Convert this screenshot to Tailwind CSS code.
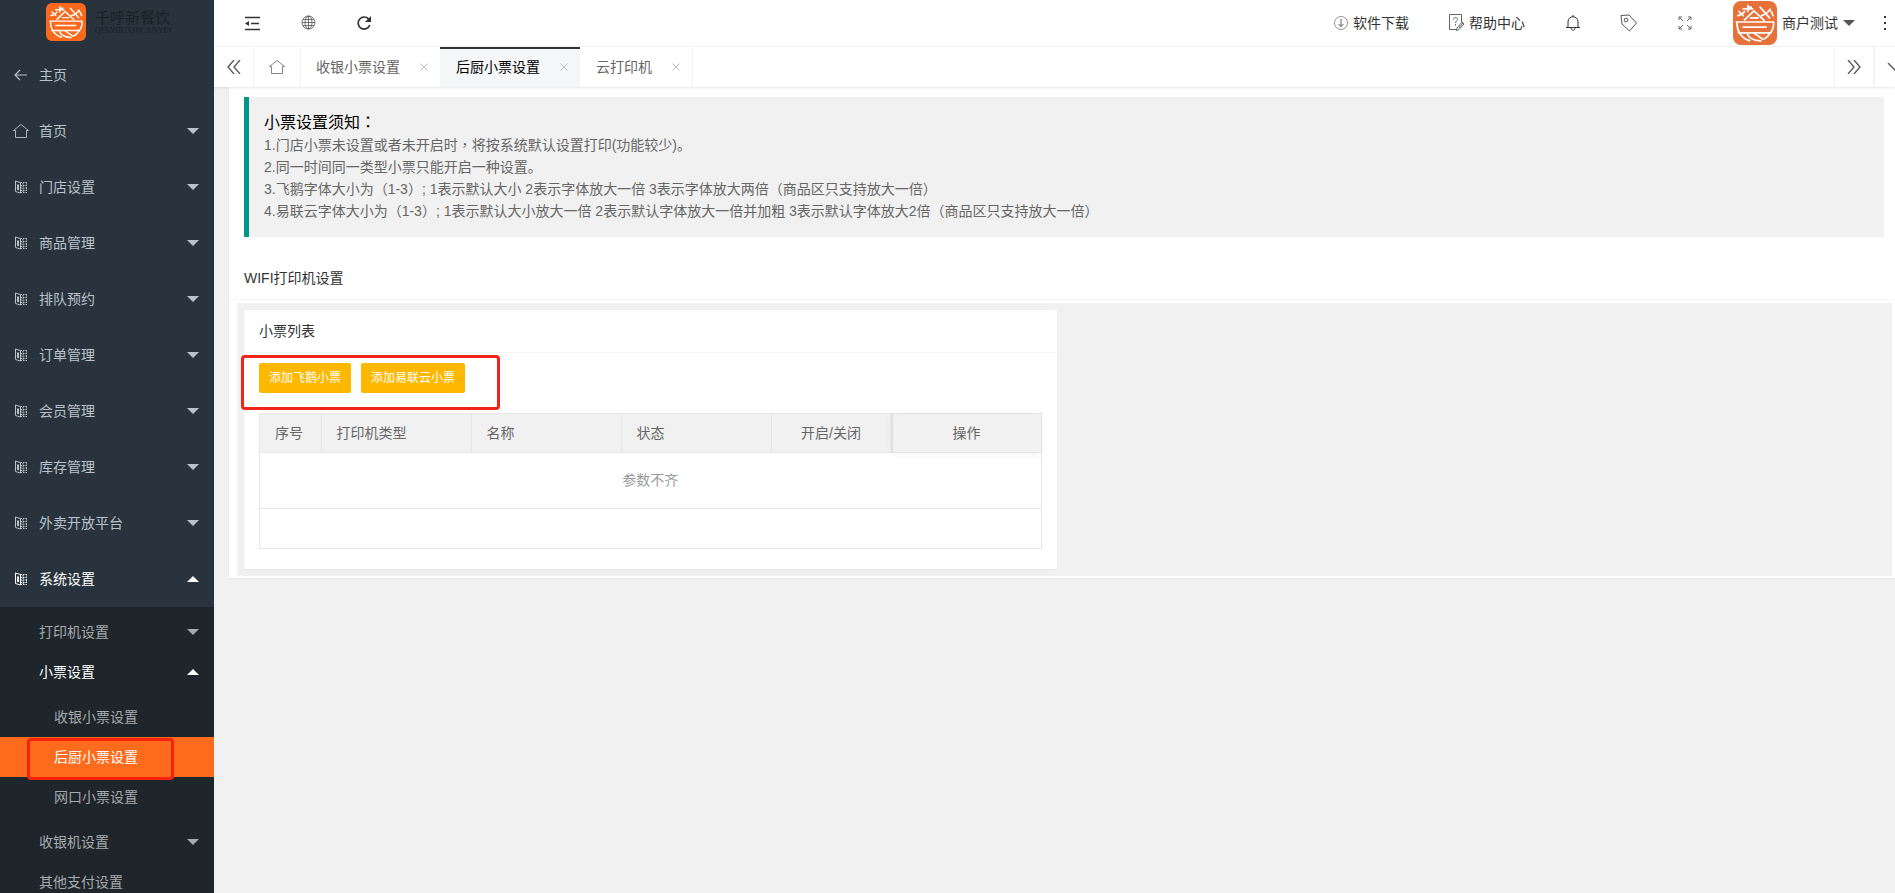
<!DOCTYPE html>
<html lang="zh-CN">
<head>
<meta charset="utf-8">
<title>后厨小票设置</title>
<script src="https://cdn.jsdelivr.net/npm/@tailwindcss/browser@4"></script>
</head>
<body class="h-screen overflow-hidden bg-[#f1f1f1] font-['Liberation_Sans','Noto_Sans_CJK_SC',sans-serif] text-sm text-[#333]">
<svg class="hidden" aria-hidden="true">
  <symbol id="logo" viewBox="0 0 130 130">
    <g fill="none" stroke="#fff" stroke-width="5" stroke-linecap="round" stroke-linejoin="round">
      <path d="M10 62H120M30 77H98M16 94H112M12 62C11 74 14 85 19 94C26 106 37 114 49 117M120 62C121 76 117 87 110 95C105 103 99 109 92 112"/>
      <path d="M62 95L88 113M42 95C45 108 60 117 82 118"/>
      <path d="M14 43C22 42 29 38 34 31M17 31L30 43M34 56L62 29L92 57M52 50H74M30 23H58M44 13V31M44 18H54M80 18L108 50M84 43C95 41 104 33 110 24M112 30C115 34 117 38 118 43"/>
    </g>
  </symbol>
  <symbol id="book" viewBox="0 0 14 14">
    <g fill="none" stroke="currentColor"><path d="M1.500 1v10.500L6.500 13V2.500L1 1M3.500 4.500v5.500M4.500 4.500v5.500"/><path stroke-dasharray="1.500 1" d="M6.500 2.500H13M6.500 5.500H13M6.500 8H13M6.500 10.500H13M6.500 12.500H13M9 3V13M12.500 2V13"/></g>
  </symbol>
  <symbol id="house" viewBox="0 0 16 16"><path fill="none" stroke="currentColor" stroke-width=".9" d="M.5 7.500L8 1.500L15.500 7.500H13.500V14.500H2.500V7.500H.5"/></symbol>
  <symbol id="down" viewBox="0 0 12 6"><path fill="currentColor" d="M0 0H12L6 6Z"/></symbol>
  <symbol id="up" viewBox="0 0 12 6"><path fill="currentColor" d="M0 6H12L6 0Z"/></symbol>
  <symbol id="close" viewBox="0 0 8 8"><path fill="none" stroke="currentColor" d="M.5.5L7.500 7.500M7.500.5L.5 7.500"/></symbol>
</svg>

<div class="flex h-full">
  <aside class="h-full w-[214px] shrink-0 overflow-hidden bg-[#28333e] text-[#bac1c8]">
    <a href="#" class="flex h-[47px] items-center pl-[46px] pb-1">
      <svg class="h-[38px] w-10 rounded-md bg-[#fb6a1c]" preserveAspectRatio="none"><use href="#logo"/></svg>
      <span class="ml-[9px] text-[#1a2027]">
        <span class="block text-[15px] leading-[18px]">千呼新餐饮</span>
        <span class="block font-['Liberation_Serif',serif] text-[8px] leading-[8px]">QIANHUXINCANYIN</span>
      </span>
    </a>
    <nav>
      <ul>
        <li><a href="#" class="flex h-14 items-center pl-[14px] pr-[15px]"><svg class="mr-3 h-3 w-[13px]" viewBox="0 0 13 12" fill="none" stroke="currentColor" stroke-width="1.200"><path d="M13 6H1M6 1L1 6L6 11"/></svg>主页</a></li>
        <li><a href="#" class="flex h-14 items-center pl-[13px] pr-[15px]"><svg class="mr-[10px] h-4 w-4"><use href="#house"/></svg>首页<svg class="ml-auto h-1.5 w-3"><use href="#down"/></svg></a></li>
        <li><a href="#" class="flex h-14 items-center pl-[14px] pr-[15px]"><svg class="mr-[11px] h-[14px] w-[14px]"><use href="#book"/></svg>门店设置<svg class="ml-auto h-1.5 w-3"><use href="#down"/></svg></a></li>
        <li><a href="#" class="flex h-14 items-center pl-[14px] pr-[15px]"><svg class="mr-[11px] h-[14px] w-[14px]"><use href="#book"/></svg>商品管理<svg class="ml-auto h-1.5 w-3"><use href="#down"/></svg></a></li>
        <li><a href="#" class="flex h-14 items-center pl-[14px] pr-[15px]"><svg class="mr-[11px] h-[14px] w-[14px]"><use href="#book"/></svg>排队预约<svg class="ml-auto h-1.5 w-3"><use href="#down"/></svg></a></li>
        <li><a href="#" class="flex h-14 items-center pl-[14px] pr-[15px]"><svg class="mr-[11px] h-[14px] w-[14px]"><use href="#book"/></svg>订单管理<svg class="ml-auto h-1.5 w-3"><use href="#down"/></svg></a></li>
        <li><a href="#" class="flex h-14 items-center pl-[14px] pr-[15px]"><svg class="mr-[11px] h-[14px] w-[14px]"><use href="#book"/></svg>会员管理<svg class="ml-auto h-1.5 w-3"><use href="#down"/></svg></a></li>
        <li><a href="#" class="flex h-14 items-center pl-[14px] pr-[15px]"><svg class="mr-[11px] h-[14px] w-[14px]"><use href="#book"/></svg>库存管理<svg class="ml-auto h-1.5 w-3"><use href="#down"/></svg></a></li>
        <li><a href="#" class="flex h-14 items-center pl-[14px] pr-[15px]"><svg class="mr-[11px] h-[14px] w-[14px]"><use href="#book"/></svg>外卖开放平台<svg class="ml-auto h-1.5 w-3"><use href="#down"/></svg></a></li>
        <li>
          <a href="#" class="flex h-14 items-center pl-[14px] pr-[15px] text-white"><svg class="mr-[11px] h-[14px] w-[14px]"><use href="#book"/></svg>系统设置<svg class="ml-auto h-1.5 w-3"><use href="#up"/></svg></a>
          <ul class="bg-[#1e252b] py-[5px] text-[#a7aaad]">
            <li><a href="#" class="flex h-10 items-center pl-[39px] pr-[15px]">打印机设置<svg class="ml-auto h-1.5 w-3"><use href="#down"/></svg></a></li>
            <li>
              <a href="#" class="flex h-10 items-center pl-[39px] pr-[15px] text-white">小票设置<svg class="ml-auto h-1.5 w-3"><use href="#up"/></svg></a>
              <ul class="py-[5px]">
                <li><a href="#" class="flex h-10 items-center pl-[54px]">收银小票设置</a></li>
                <li class="relative">
                  <a href="#" class="flex h-10 items-center bg-[#ff6b1c] pl-[54px] text-white">后厨小票设置</a>
                  <span class="pointer-events-none absolute left-[27px] top-px z-10 h-[42px] w-[147px] rounded-sm border-3 border-[#f8210c]"></span>
                </li>
                <li><a href="#" class="flex h-10 items-center pl-[54px]">网口小票设置</a></li>
              </ul>
            </li>
            <li><a href="#" class="flex h-10 items-center pl-[39px] pr-[15px]">收银机设置<svg class="ml-auto h-1.5 w-3"><use href="#down"/></svg></a></li>
            <li><a href="#" class="flex h-10 items-center pl-[39px]">其他支付设置</a></li>
          </ul>
        </li>
      </ul>
    </nav>
  </aside>

  <div class="flex min-w-0 flex-1 flex-col">
    <header class="flex h-[47px] shrink-0 items-start border-b border-[#f4f4f4] bg-white pl-[10px]">
      <button aria-label="折叠菜单" class="flex h-[45px] w-14 items-center justify-center"><svg class="h-4 w-4" viewBox="0 0 16 16" fill="none" stroke="#333" stroke-width="1.500"><path d="M1 2.500H16M7 8.500H15M1 14.500H16"/><path fill="#333" stroke="none" d="M1 8.500L5 6V11Z"/></svg></button>
      <button aria-label="网站" class="flex h-[45px] w-14 items-center justify-center"><svg class="h-[15px] w-[15px]" viewBox="0 0 15 15" fill="none" stroke="#444" stroke-width=".7"><circle cx="7.500" cy="7.500" r="6.500"/><ellipse cx="7.500" cy="7.500" rx="3.500" ry="6.500"/><path d="M7.500 1V14M1 7.500H14M2 4.500H13M2 10.500H13"/></svg></button>
      <button aria-label="刷新" class="flex h-[45px] w-14 items-center justify-center"><svg class="h-4 w-4" viewBox="0 0 16 16" fill="none" stroke="#333" stroke-width="1.700"><path d="M13 4.500A6 6 0 1 0 13.800 10"/><path fill="#333" stroke="none" d="M15 1V7H9Z"/></svg></button>
      <div class="ml-auto flex h-[45px] shrink-0 items-center">
        <a href="#" class="flex items-center gap-[5px] px-5"><svg class="h-[14px] w-[14px]" viewBox="0 0 14 14" fill="none" stroke="#777" stroke-width=".8"><circle cx="7" cy="7" r="6.500"/><path stroke="#333" d="M7 3V10.500M4.500 8L7 10.500L9.500 8"/></svg>软件下载</a>
        <a href="#" class="flex items-center gap-[5px] px-5"><svg class="h-[17px] w-[15px]" viewBox="0 0 15 17" fill="none" stroke="#555" stroke-width=".9"><path d="M8 15.500H.5V.5H12.500V8M4.500 5.500C4.500 3 8.500 3 8.500 5.500C8.500 7 6.500 7 6.500 9M6.500 10V11.500M8 14L13 8L15 10L10 15.500L7.500 16.500L8 14M10 14L14 9"/></svg>帮助中心</a>
        <button aria-label="消息" class="flex w-14 justify-center"><svg class="h-4 w-4" viewBox="0 0 16 16" fill="none" stroke="#333"><path d="M1 12.500H15M3 12.500V7C3 0 13 0 13 7V12.500M6 13C6 16 10 16 10 13M8 0V2"/></svg></button>
        <button aria-label="主题" class="flex w-14 justify-center"><svg class="h-[18px] w-[18px]" viewBox="0 0 18 18" fill="none" stroke="#555"><path d="M1 1.500L9 1L16.500 9L9.500 17L2 10Z"/><circle cx="6" cy="6" r="1.800"/></svg></button>
        <button aria-label="全屏" class="flex w-14 justify-center"><svg class="h-[14px] w-[14px]" viewBox="0 0 14 14" fill="none" stroke="#666"><path d="M1 4V1H4M1 1L5 5M10 1H13V4M13 1L9 5M1 10V13H4M1 13L5 9M13 10V13H10M13 13L9 9"/></svg></button>
        <button class="flex items-center gap-[5px] px-5"><svg class="h-11 w-11 rounded-lg bg-[#e7713a]"><use href="#logo"/></svg>商户测试<svg class="h-1.5 w-3 text-[#555]"><use href="#down"/></svg></button>
        <button aria-label="更多" class="flex w-5 justify-center"><svg class="h-[14px] w-1" viewBox="0 0 4 14" fill="#333"><path d="M1 0h2v2H1zM1 6h2v2H1zM1 12h2v2H1z"/></svg></button>
      </div>
    </header>

    <div class="z-10 flex h-10 shrink-0 overflow-hidden bg-white text-[#666] shadow-[0_1px_2px_rgba(0,0,0,.1)]">
      <button aria-label="向左滚动" class="flex w-10 shrink-0 items-center justify-center border-r border-[#f4f4f4]"><svg class="h-[14px] w-[14px]" viewBox="0 0 14 14" fill="none" stroke="#555" stroke-width="1.300"><path d="M7 0L1 7L7 14M13 0L7 7L13 14"/></svg></button>
      <a href="#" aria-label="首页" class="flex w-[47px] shrink-0 items-center justify-center border-r border-[#f4f4f4] text-[#777]"><svg class="h-4 w-4"><use href="#house"/></svg></a>
      <div class="flex w-[139px] shrink-0 items-center justify-between pl-[15px] pr-3"><a href="#">收银小票设置</a><button aria-label="关闭收银小票设置" class="text-[#bbb]"><svg class="h-2 w-2"><use href="#close"/></svg></button></div>
      <div class="flex w-[140px] shrink-0 items-center justify-between border-t-2 border-[#333] bg-[#f5f6f7] pl-4 pr-3 pb-0.5 text-black"><a href="#">后厨小票设置</a><button aria-label="关闭后厨小票设置" class="text-[#bbb]"><svg class="h-2 w-2"><use href="#close"/></svg></button></div>
      <div class="flex w-[113px] shrink-0 items-center justify-between border-r border-[#f4f4f4] pl-4 pr-3"><a href="#">云打印机</a><button aria-label="关闭云打印机" class="text-[#bbb]"><svg class="h-2 w-2"><use href="#close"/></svg></button></div>
      <div class="ml-auto flex w-[61px] shrink-0 overflow-hidden">
        <button aria-label="向右滚动" class="flex w-10 shrink-0 items-center justify-center border-x border-[#f4f4f4]"><svg class="h-[14px] w-[14px]" viewBox="0 0 14 14" fill="none" stroke="#555" stroke-width="1.300"><path d="M1 0L7 7L1 14M7 0L13 7L7 14"/></svg></button>
        <button aria-label="标签操作" class="flex w-10 shrink-0 items-center justify-center border-l border-[#f4f4f4]"><svg class="h-2 w-4" viewBox="0 0 16 8" fill="none" stroke="#555" stroke-width="1.300"><path d="M1 0L8 7L15 0"/></svg></button>
      </div>
    </div>

    <main class="pl-[15px]">
      <div class="bg-white pb-0.5 pt-[10px] shadow-[0_1px_2px_rgba(0,0,0,.05)]">
        <section class="ml-[15px] mr-[11px] border-l-5 border-[#009688] bg-[#f1f1f1] p-[15px] leading-[22px] text-[#666]">
          <h2 class="text-base leading-[22px] text-black">小票设置须知<span lang="zh-TW" class="font-['Noto_Sans_CJK_TC',sans-serif] leading-[0px]">：</span></h2>
          <p>1.门店小票未设置或者未开启时<span lang="zh-TW" class="font-['Noto_Sans_CJK_TC',sans-serif] leading-[0px]">，</span>将按系统默认设置打印(功能较少)。</p>
          <p>2.同一时间同一类型小票只能开启一种设置。</p>
          <p>3.飞鹅字体大小为（1-3）; 1表示默认大小 2表示字体放大一倍 3表示字体放大两倍（商品区只支持放大一倍）</p>
          <p>4.易联云字体大小为（1-3）; 1表示默认大小放大一倍 2表示默认字体放大一倍并加粗 3表示默认字体放大2倍（商品区只支持放大一倍）</p>
        </section>
        <h1 class="mt-5 flex h-[43px] items-center border-b border-[#f6f6f6] pl-[15px]">WIFI打印机设置</h1>
        <div class="ml-2 mr-[3px] mt-[3px] bg-[#f1f1f1] py-[7px]">
          <div class="w-1/2 pl-[7px] pr-2">
            <section class="rounded-xs bg-white pb-5 shadow-[0_1px_2px_rgba(0,0,0,.05)]">
              <h2 class="flex h-[43px] items-center border-b border-[#f4f4f4] px-[15px]">小票列表</h2>
              <div class="relative flex gap-[10px] px-[15px] pb-5 pt-[10px]">
                <button class="h-[30px] rounded-xs bg-[#ffb800] px-[10px] text-xs text-white">添加飞鹅小票</button>
                <button class="h-[30px] rounded-xs bg-[#ffb800] px-[10px] text-xs text-white">添加易联云小票</button>
                <span class="pointer-events-none absolute -left-[3px] top-0.5 h-[55px] w-[259px] rounded-sm border-3 border-[#f0251a]"></span>
              </div>
              <div class="mx-[15px] border border-[#e6e6e6]">
                <table class="w-full table-fixed border-collapse text-[#666]">
                  <colgroup><col class="w-[61px]"><col class="w-[150px]"><col class="w-[150px]"><col class="w-[150px]"><col><col class="w-[149px]"></colgroup>
                  <thead class="bg-[#f1f1f1]">
                    <tr class="h-[38px] border-b border-[#e6e6e6] text-left">
                      <th class="border-r border-[#e6e6e6] pl-[15px] font-normal">序号</th>
                      <th class="border-r border-[#e6e6e6] pl-[15px] font-normal">打印机类型</th>
                      <th class="border-r border-[#e6e6e6] pl-[15px] font-normal">名称</th>
                      <th class="border-r border-[#e6e6e6] pl-[15px] font-normal">状态</th>
                      <th class="border-r-2 border-[#dedede] text-center font-normal">开启/关闭</th>
                      <th class="text-center font-normal shadow-[0_2px_8px_rgba(0,0,0,.06)]">操作</th>
                    </tr>
                  </thead>
                  <tbody>
                    <tr class="h-14 border-b border-[#e6e6e6]"><td colspan="6" class="text-center text-[#999]">参数不齐</td></tr>
                    <tr class="h-10"><td colspan="6"></td></tr>
                  </tbody>
                </table>
              </div>
            </section>
          </div>
        </div>
      </div>
    </main>
  </div>
</div>
</body>
</html>
